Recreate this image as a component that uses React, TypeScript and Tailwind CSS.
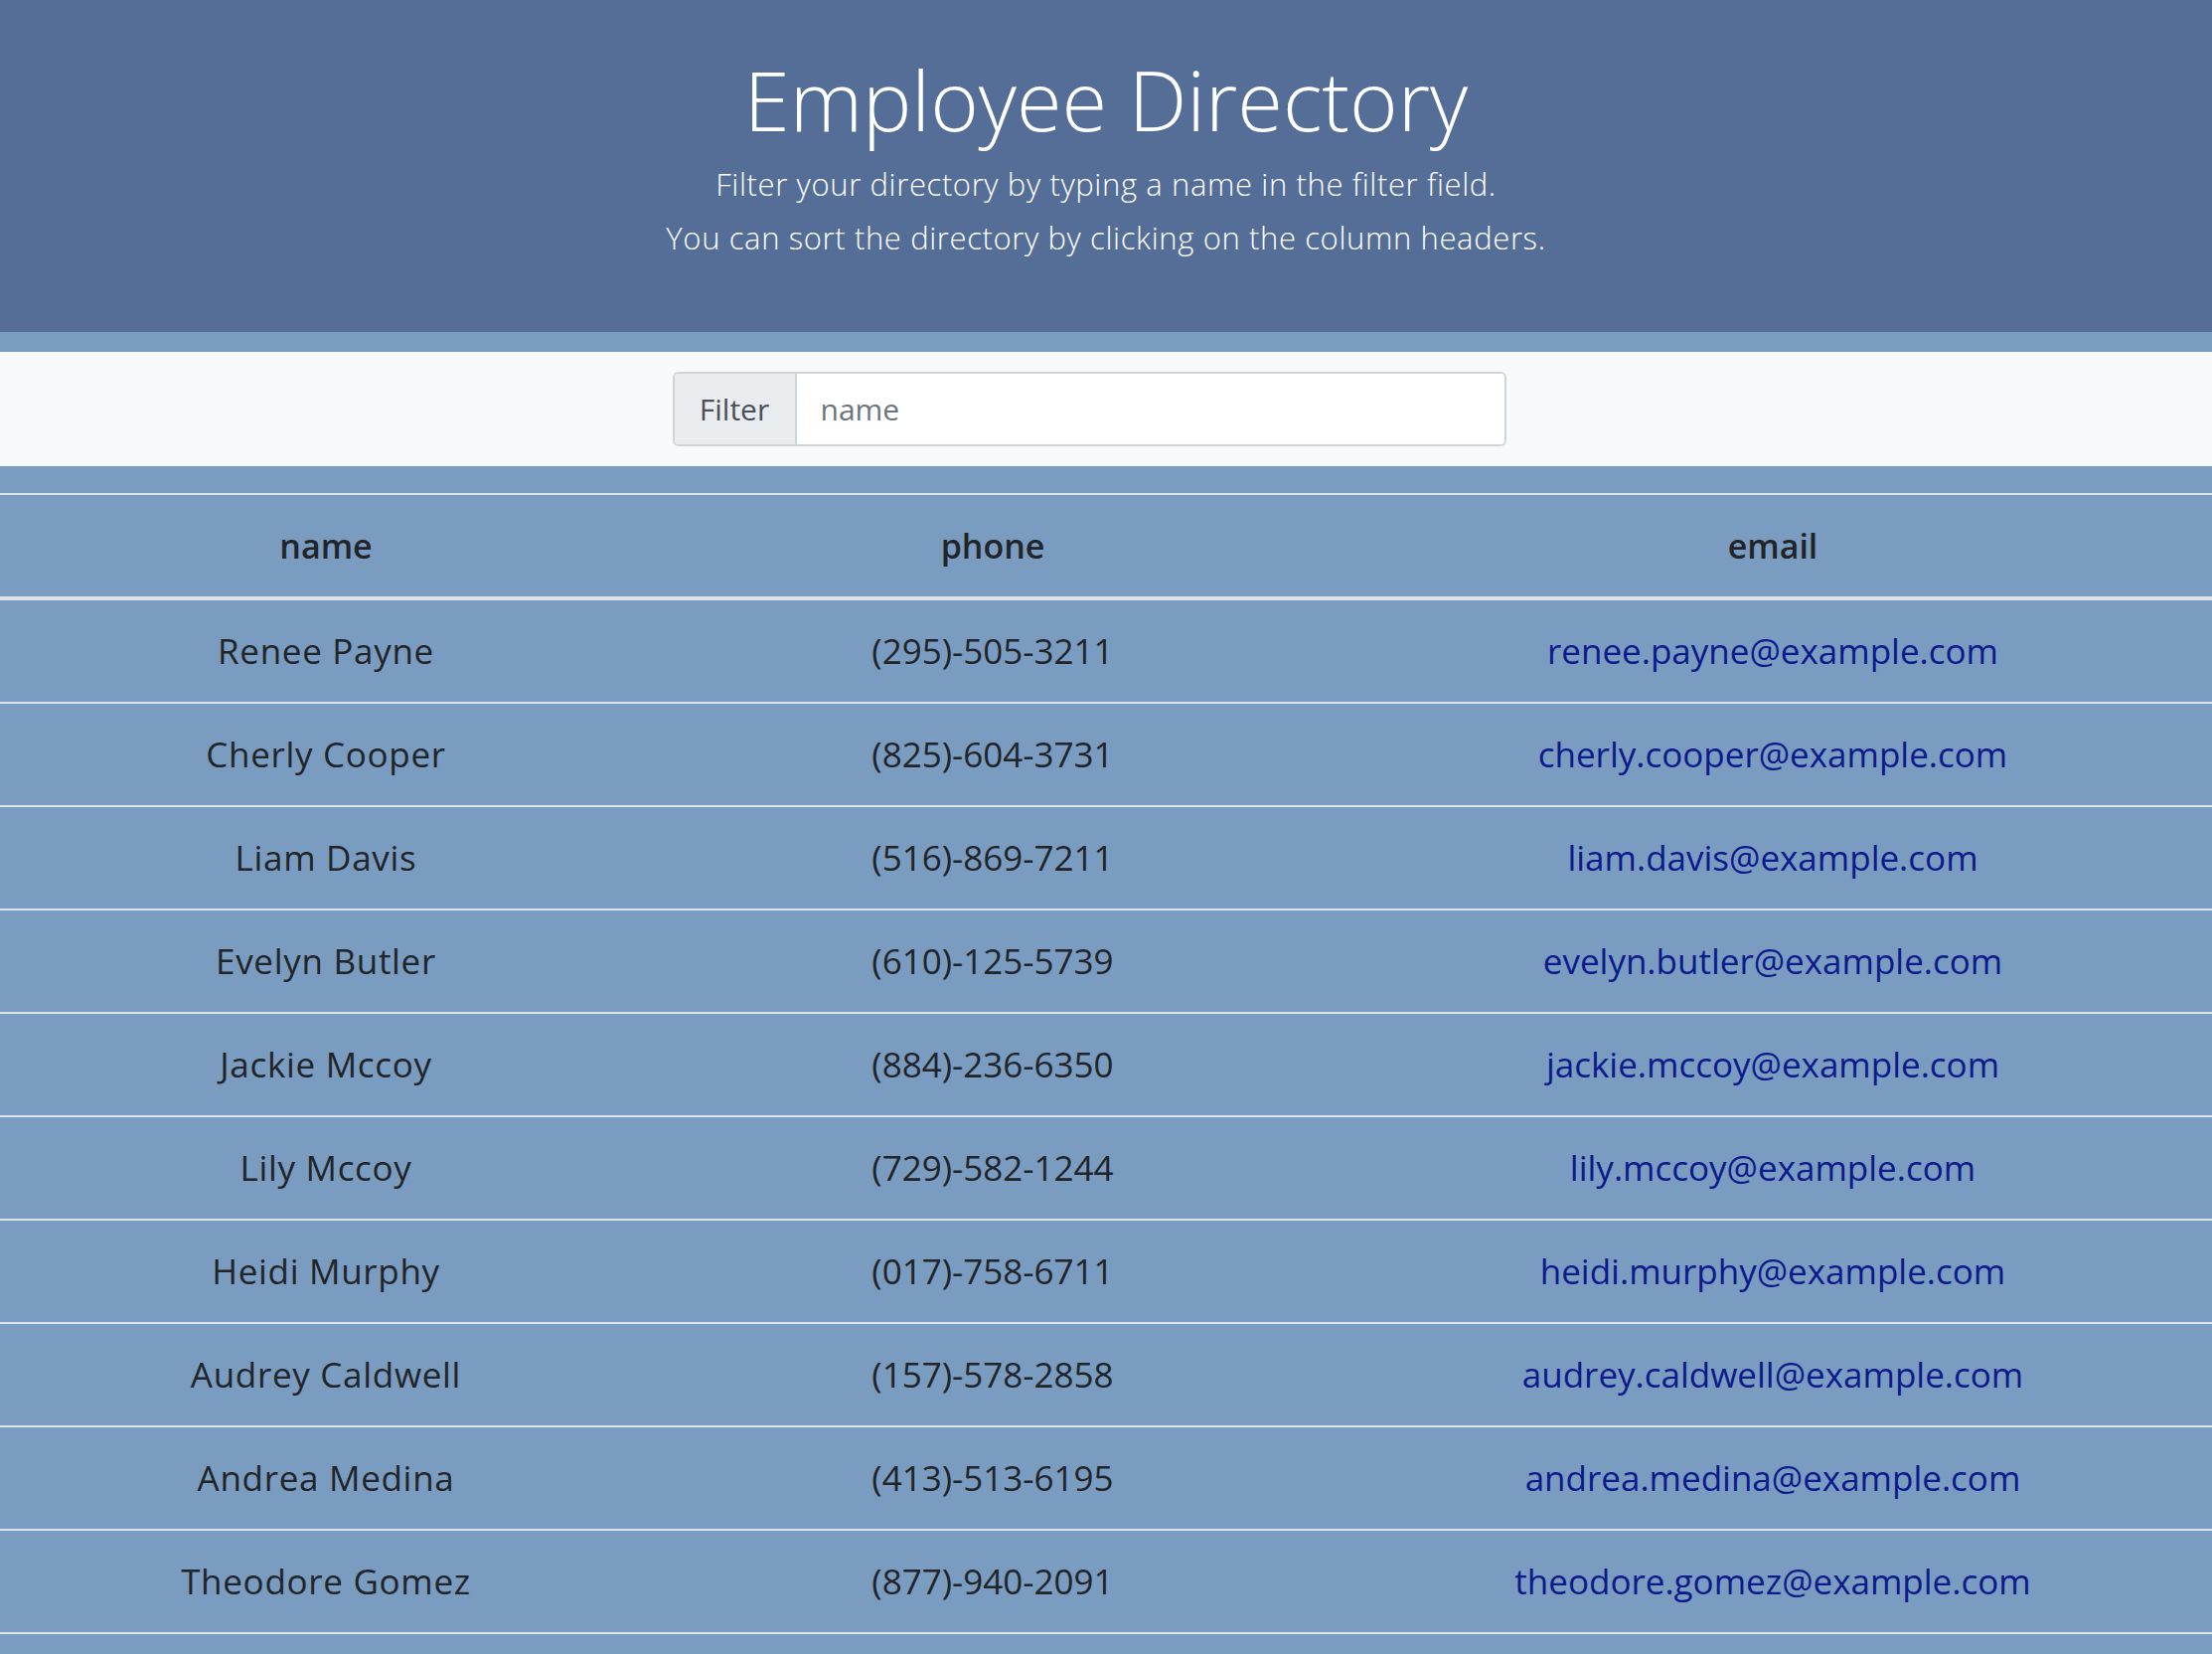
import { useState } from "react";

type Employee = { name: string; phone: string; email: string };

const employees: Employee[] = [
  { name: "Renee Payne", phone: "(295)-505-3211", email: "renee.payne@example.com" },
  { name: "Cherly Cooper", phone: "(825)-604-3731", email: "cherly.cooper@example.com" },
  { name: "Liam Davis", phone: "(516)-869-7211", email: "liam.davis@example.com" },
  { name: "Evelyn Butler", phone: "(610)-125-5739", email: "evelyn.butler@example.com" },
  { name: "Jackie Mccoy", phone: "(884)-236-6350", email: "jackie.mccoy@example.com" },
  { name: "Lily Mccoy", phone: "(729)-582-1244", email: "lily.mccoy@example.com" },
  { name: "Heidi Murphy", phone: "(017)-758-6711", email: "heidi.murphy@example.com" },
  { name: "Audrey Caldwell", phone: "(157)-578-2858", email: "audrey.caldwell@example.com" },
  { name: "Andrea Medina", phone: "(413)-513-6195", email: "andrea.medina@example.com" },
  { name: "Theodore Gomez", phone: "(877)-940-2091", email: "theodore.gomez@example.com" },
];

const cols = "grid grid-cols-[656px_686px_1fr]";

export default function App() {
  const [filter, setFilter] = useState("");

  const rows = employees.filter((e) =>
    e.name.toLowerCase().includes(filter.toLowerCase())
  );

  return (
    <div className="min-h-screen bg-[#7a9cc0] font-['Open_Sans',sans-serif] text-[#212529]">
      {/* Jumbotron */}
      <header className="h-[334px] bg-[#546e98] flex flex-col items-center pt-[50px] text-white">
        <h1 className="text-[83px] leading-[1.2] font-light">Employee Directory</h1>
        <p className="mt-[8px] text-[31px] leading-[54px] font-light tracking-[0.02em] text-center">
          Filter your directory by typing a name in the filter field.
          <br />
          You can sort the directory by clicking on the column headers.
        </p>
      </header>

      {/* Filter bar */}
      <div className="mt-[20px] h-[115px] bg-[#f8f9fa] flex items-center justify-center">
        <div className="ml-[-34px] flex w-[839px] h-[75px] rounded-[6px] border-2 border-[#ced4da] overflow-hidden">
          <span className="w-[123px] shrink-0 flex items-center justify-center bg-[#e9ecef] border-r-2 border-[#ced4da] text-[30px] text-[#495057]">
            Filter
          </span>
          <input
            value={filter}
            onChange={(e) => setFilter(e.target.value)}
            placeholder="name"
            className="flex-1 bg-white px-[24px] text-[30px] text-[#495057] placeholder:text-[#6c757d] outline-none"
          />
        </div>
      </div>

      {/* Table */}
      <div className="mt-[27px] border-t-2 border-[#dee3ea]">
        <div className={`${cols} h-[106px] items-center text-center text-[34px] font-semibold border-b-4 border-[#dee3ea]`}>
          <div>name</div>
          <div>phone</div>
          <div>email</div>
        </div>
        {rows.map((e) => (
          <div
            key={e.email}
            className={`${cols} h-[104px] items-center text-center text-[35px] border-b-2 border-[#dee3ea]`}
          >
            <div className="tracking-[0.02em]">{e.name}</div>
            <div>{e.phone}</div>
            <div>
              <a href={`mailto:${e.email}`} className="text-[#0b1a8c]">
                {e.email}
              </a>
            </div>
          </div>
        ))}
      </div>
    </div>
  );
}
